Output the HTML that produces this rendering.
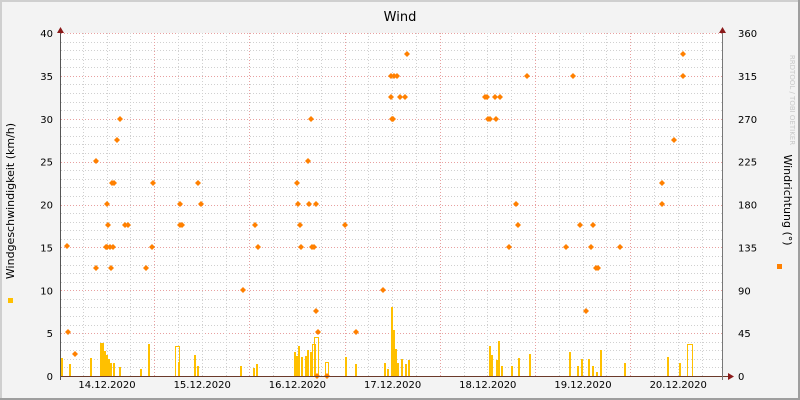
<!DOCTYPE html>
<html><head><meta charset="utf-8"><style>
html,body{margin:0;padding:0;width:800px;height:400px;overflow:hidden;background:#f3f3f3}
svg{display:block}
text{font-family:"DejaVu Sans","Liberation Sans",sans-serif;font-size:10px;fill:#000}
</style></head><body>
<svg id="s" width="800" height="400" xmlns="http://www.w3.org/2000/svg">
<rect x="0" y="0" width="800" height="400" fill="#f3f3f3"/>
<rect x="0" y="0" width="800" height="2" fill="#cfcfcf"/>
<rect x="0" y="0" width="2" height="400" fill="#cfcfcf"/>
<rect x="798" y="0" width="2" height="400" fill="#9e9e9e"/>
<rect x="0" y="398" width="800" height="2" fill="#9e9e9e"/>
<rect x="61" y="33" width="661" height="343" fill="#ffffff"/>
<g id="grid"></g>
<g id="bars"></g>
<g id="dots"></g>
<line x1="61" y1="376.5" x2="728" y2="376.5" stroke="#6b3a2a" stroke-width="1"/>
<line x1="60.5" y1="30" x2="60.5" y2="380" stroke="#555" stroke-width="1"/>
<line x1="722.5" y1="30" x2="722.5" y2="380" stroke="#777" stroke-width="1"/>
<polygon points="57,33 64,33 60.5,27" fill="#8b1a1a"/>
<polygon points="719,33 726,33 722.5,27" fill="#8b1a1a"/>
<polygon points="728,373 728,380 734,376.5" fill="#8b1a1a"/>
<text x="400" y="21" text-anchor="middle" style="font-size:13px">Wind</text>
<text transform="translate(14,201) rotate(-90)" text-anchor="middle" style="font-size:11px">Windgeschwindigkeit (km/h)</text>
<text transform="translate(784,200) rotate(90)" text-anchor="middle" style="font-size:11px">Windrichtung (°)</text>
<text transform="translate(790,100) rotate(90)" text-anchor="middle" style="font-size:7px;fill:#c8c8c8">RRDTOOL / TOBI OETIKER</text>
<rect x="8" y="298" width="5" height="5" fill="#ffc000"/>
<rect x="777" y="264" width="5" height="5" fill="#ff8000"/>
<g id="lab"></g>
</svg>
<script>
var ns="http://www.w3.org/2000/svg";
function el(p,t,a,txt){var e=document.createElementNS(ns,t);for(var k in a)e.setAttribute(k,a[k]);if(txt!=null)e.textContent=txt;document.getElementById(p).appendChild(e);return e;}
var y0=376,pu=343/40;
for(var i=1;i<40;i++){var y=Math.round(y0-i*pu)+0.5;var red=i%5==0;
el("grid","line",{x1:61,x2:722,y1:y,y2:y,stroke:red?"#e8a0a0":"#d0d0d0","stroke-dasharray":"1,2"});}
el("grid","line",{x1:61,x2:722,y1:33.5,y2:33.5,stroke:"#e8a0a0","stroke-dasharray":"1,2"});
for(var x=59;x<722;x+=23.8){var xx=Math.round(x)+0.5;var k=Math.round((x-59)/23.8);if(xx<62)continue;
var red=(k%4==0);el("grid","line",{x1:xx,x2:xx,y1:33,y2:376,stroke:red?"#e8a0a0":"#d0d0d0","stroke-dasharray":"1,2"});}
for(var i=0;i<=8;i++){var y=y0-i*5*pu;
el("lab","text",{x:53,y:y+4,"text-anchor":"end"},String(i*5));
el("lab","text",{x:738,y:y+4},String(i*45));}
var days=["14.12.2020","15.12.2020","16.12.2020","17.12.2020","18.12.2020","19.12.2020","20.12.2020"];
for(var i=0;i<7;i++)el("lab","text",{x:107+i*95.2,y:388,"text-anchor":"middle"},days[i]);
var bars=[[61,358],[69,364],[90,358],[100,343],[102,343],[104,351],[106,355],[108,359],[110,363],[113,363],[119,367],[140,369],[148,344],[178,362],[194,355],[197,366],[240,366],[253,368],[256,364],[294,352],[296,356],[298,346],[301,357],[305,356],[307,350],[310,352],[345,357],[355,364],[384,363],[387,369],[391,307],[393,330],[395,349],[397,363],[401,359],[405,364],[408,360],[489,346],[491,355],[496,360],[498,341],[501,366],[511,366],[518,358],[529,354],[569,352],[577,366],[581,359],[588,359],[592,366],[596,372],[600,350],[624,363],[667,357],[679,363]];
bars.forEach(function(b){el("bars","rect",{x:b[0],y:b[1],width:2,height:376-b[1],fill:"#ffc000"});});
var ob=[[175,346,4],[312,344,3],[314,337,4],[325,362,3],[687,344,5]];
ob.forEach(function(b){el("bars","rect",{x:b[0]+0.5,y:b[1]+0.5,width:b[2],height:376-b[1],fill:"none",stroke:"#ffc000"});});
var d=[[67,246],[68,332],[75,354],[96,161],[96,268],[106,247],[107,204],[108,225],[110,247],[112,183],[114,183],[107,247],[111,268],[113,247],[117,140],[120,119],[125,225],[128,225],[146,268],[152,247],[153,183],[180,204],[180,225],[182,225],[198,183],[201,204],[243,290],[255,225],[258,247],[297,183],[298,204],[300,225],[301,247],[308,161],[309,204],[311,119],[312,247],[314,247],[316,204],[316,311],[318,332],[317,376],[345,225],[356,332],[383,290],[391,76],[391,97],[392,119],[393,119],[394,76],[397,76],[400,97],[405,97],[407,54],[485,97],[487,97],[488,119],[490,119],[495,97],[496,119],[500,97],[509,247],[516,204],[518,225],[527,76],[566,247],[573,76],[580,225],[586,311],[591,247],[593,225],[596,268],[598,268],[620,247],[662,183],[662,204],[674,140],[683,76],[683,54],[327,376]];
d.forEach(function(p){var x=p[0],y=p[1];el("dots","polygon",{points:(x-3)+","+y+" "+x+","+(y-3)+" "+(x+3)+","+y+" "+x+","+(y+3),fill:"#ff8000"});});
</script>
</body></html>
